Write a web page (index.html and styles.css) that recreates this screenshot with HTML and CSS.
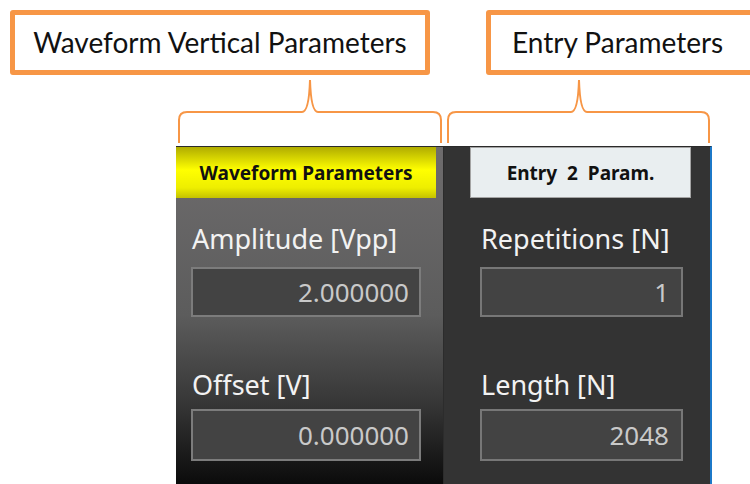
FILE: index.html
```html
<!DOCTYPE html>
<html>
<head>
<meta charset="utf-8">
<title>Waveform Parameters</title>
<link rel="stylesheet" href="styles.css">
</head>
<body>
<div class="callouts">
	<div class="callout callout-wave">Waveform Vertical Parameters</div>
	<div class="callout callout-entry">Entry Parameters</div>
</div>
<svg class="braces" width="750" height="71" viewBox="0 0 750 71">
	<!-- brace under waveform panel -->
	<path d="M179 68 L179 45 Q179 37 187 37 L302 37 Q309 37 310 5 Q311 37 318 37 L433 37 Q441 37 441 45 L441 68" />
	<!-- brace under entry panel -->
	<path d="M448 68 L448 45 Q448 37 456 37 L571 37 Q578 37 579 5 Q580 37 587 37 L701 37 Q709 37 709 45 L709 68" />
</svg>
<div class="screen">
	<div class="pane pane-wave">
		<div class="head head-wave">Waveform Parameters</div>
		<div class="field">
			<div class="label">Amplitude [Vpp]</div>
			<div class="value">2.000000</div>
		</div>
		<div class="field">
			<div class="label">Offset [V]</div>
			<div class="value">0.000000</div>
		</div>
	</div>
	<div class="pane pane-entry">
		<div class="head head-entry">Entry&nbsp; 2&nbsp; Param.</div>
		<div class="field">
			<div class="label">Repetitions [N]</div>
			<div class="value">1</div>
		</div>
		<div class="field">
			<div class="label">Length [N]</div>
			<div class="value">2048</div>
		</div>
	</div>
</div>
</body>
</html>
```

FILE: styles.css
```css
body {
	margin:0;
	background:#ffffff;
	overflow:hidden;
	width:750px;
	height:484px;
}

.callouts {
	display:flex;
	padding-top:10px;
	height:65px;
}

.callout {
	box-sizing:border-box;
	flex-shrink:0;
	height:65px;
	border:5px solid #f79646;
	border-radius:3px;
	font-family:Lato, "Noto Sans", sans-serif;
	font-size:28px;
	color:#111111;
	line-height:55px;
}

.callout-wave {
	width:420px;
	margin-left:10px;
	text-align:center;
}

.callout-entry {
	width:280px;
	margin-left:56px;
	padding-left:21px;
}

.braces {
	display:block;
}

.braces path {
	fill:none;
	stroke:#f79646;
	stroke-width:2;
}

.screen {
	display:flex;
	margin-left:176px;
	height:338px;
	width:538px;
	font-family:"Noto Sans", "Open Sans", sans-serif;
}

.pane {
	box-sizing:border-box;
	flex-shrink:0;
	border-top:1px solid #2a2a2a;
}

.pane-wave {
	width:268px;
	border-right:1px solid #2c2c2c;
	background:linear-gradient(#6e6c6d 0%, #5c5c5c 50%, #383838 75%, #0b0b0b 100%);
	padding-left:15px;
}

.pane-entry {
	width:268px;
	background:#333333;
	border-right:2px solid #1c78c8;
	padding-left:36px;
}

.head {
	box-sizing:border-box;
	height:51px;
	font-weight:bold;
	font-size:19px;
	color:#111111;
	display:flex;
	align-items:center;
	justify-content:center;
}

.head-wave {
	width:260px;
	margin-left:-15px;
	background:linear-gradient(#b0ac00 0%, #ffff00 45%, #eeee00 80%, #c4c200 100%);
}

.head-entry {
	width:221px;
	margin-left:-10px;
	background:#e9eef0;
	border:1px solid #a4a4a4;
}

.field {
	margin-top:23px;
}

.field + .field {
	margin-top:50px;
}

.label {
	color:#f2f2f2;
	font-size:27px;
	line-height:36px;
	padding-left:1px;
	white-space:nowrap;
}

.value {
	box-sizing:border-box;
	height:50px;
	margin-top:10px;
	border:2px solid #7c7c7c;
	background:#434343;
	color:#c9c9c9;
	font-size:26px;
	line-height:46px;
	text-align:right;
	padding-right:10px;
}

.field + .field .value {
	margin-top:6px;
	height:52px;
	line-height:48px;
}

.pane-wave .value {
	width:230px;
}

.pane-entry .value {
	width:203px;
	padding-right:12px;
	border-color:#777777;
}
```
